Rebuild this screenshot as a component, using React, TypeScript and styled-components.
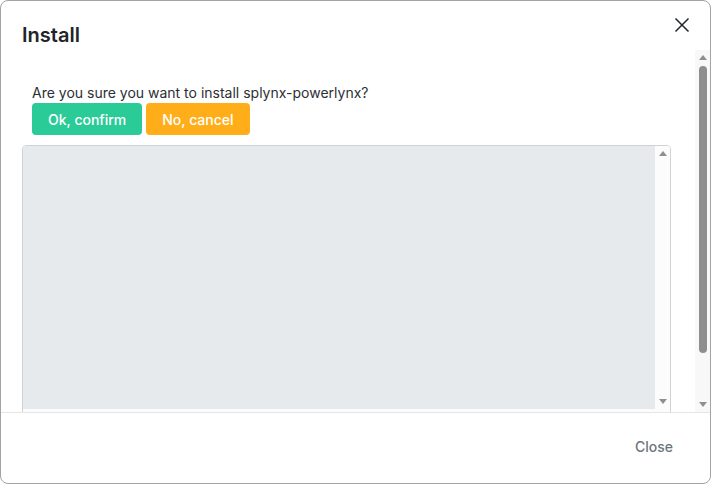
import { styled, createGlobalStyle } from "styled-components";

const GlobalStyle = createGlobalStyle`
  html, body {
    margin: 0;
    padding: 0;
    background: #ffffff;
  }
  * {
    box-sizing: border-box;
  }
`;

type Dir = "up" | "down" | "left" | "right";

const Modal = styled.div`
  width: 711px;
  height: 484px;
  border: 1px solid #a3a3a3;
  border-radius: 8px;
  background: #fff;
  display: flex;
  flex-direction: column;
  overflow: hidden;
  font-family: Inter, "Noto Sans", sans-serif;
  color: #212529;
`;

const Header = styled.div`
  height: 49px;
  flex-shrink: 0;
  display: flex;
  align-items: flex-start;
  justify-content: space-between;
  padding: 20px 20px 0 21px;
`;

const Title = styled.h2`
  margin: 0;
  font-size: 20px;
  line-height: 28px;
  font-weight: 600;
  color: #212529;
`;

const CloseIcon = styled.button`
  border: none;
  background: none;
  padding: 0;
  margin-top: -4px;
  width: 16px;
  height: 16px;
  cursor: pointer;
  color: #212529;
`;

const BodyRow = styled.div`
  flex: 1;
  min-height: 0;
  display: flex;
`;

const Body = styled.div`
  flex: 1;
  min-width: 0;
  overflow: hidden;
  padding: 33px 24px 41px 21px;
`;

const ScrollTrack = styled.div<{ $bg: string }>`
  width: 15px;
  flex-shrink: 0;
  display: flex;
  flex-direction: column;
  background: ${(p) => p.$bg};
`;

const HScrollTrack = styled.div<{ $bg: string }>`
  height: 15px;
  display: flex;
  align-items: center;
  justify-content: space-between;
  background: ${(p) => p.$bg};
`;

const ArrowButton = styled.div`
  width: 15px;
  height: 15px;
  flex-shrink: 0;
  display: flex;
  align-items: center;
  justify-content: center;
`;

const Triangle = styled.span<{ $dir: Dir }>`
  width: 0;
  height: 0;
  border-style: solid;
  border-color: transparent;
  ${(p) =>
    p.$dir === "up"
      ? "border-width: 0 4.5px 5px 4.5px; border-bottom-color: #8f8f8f;"
      : p.$dir === "down"
      ? "border-width: 5px 4.5px 0 4.5px; border-top-color: #8f8f8f;"
      : p.$dir === "left"
      ? "border-width: 4.5px 5px 4.5px 0; border-right-color: #8f8f8f;"
      : "border-width: 4.5px 0 4.5px 5px; border-left-color: #8f8f8f;"}
`;

const ThumbLane = styled.div`
  flex: 1;
  display: flex;
  justify-content: center;
  padding-top: 1px;
`;

const Thumb = styled.div<{ $size: number }>`
  width: 8px;
  height: ${(p) => p.$size}px;
  border-radius: 4px;
  background: #8e8e8e;
`;

const Message = styled.div`
  padding-left: 10px;
`;

const Question = styled.p`
  margin: 0;
  font-size: 14px;
  line-height: 20px;
  color: #2b2f33;
`;

const Actions = styled.div`
  display: flex;
  gap: 4px;
`;

const ActionButton = styled.button<{ $tone: "ok" | "no" }>`
  height: 32px;
  padding: 0 16px;
  border: none;
  border-radius: 4px;
  background: ${(p) => (p.$tone === "ok" ? "#2bcb98" : "#ffae1a")};
  color: #fff;
  font-family: Inter, "Noto Sans", sans-serif;
  font-size: 14px;
  font-weight: 500;
  cursor: pointer;
`;

const LogBox = styled.div`
  margin-top: 10px;
  height: 280px;
  border: 1px solid #cfd3d8;
  border-radius: 4px;
  overflow: hidden;
  display: grid;
  grid-template-columns: 1fr 15px;
  grid-template-rows: 1fr 15px;
`;

const LogContent = styled.div`
  background: #e7eaed;
`;

const Corner = styled.div`
  background: #fcfcfc;
`;

const Footer = styled.div`
  height: 71px;
  flex-shrink: 0;
  border-top: 1px solid #e6e6e6;
  display: flex;
  align-items: center;
  justify-content: flex-end;
  padding: 0 37px 3px 0;
`;

const FooterButton = styled.button`
  border: none;
  background: none;
  padding: 0;
  font-family: Inter, "Noto Sans", sans-serif;
  font-size: 14px;
  font-weight: 500;
  color: #6c757d;
  cursor: pointer;
`;

function VScrollbar({ bg, thumb }: { bg: string; thumb?: number }) {
  return (
    <ScrollTrack $bg={bg}>
      <ArrowButton>
        <Triangle $dir="up" />
      </ArrowButton>
      <ThumbLane>{thumb ? <Thumb $size={thumb} /> : null}</ThumbLane>
      <ArrowButton>
        <Triangle $dir="down" />
      </ArrowButton>
    </ScrollTrack>
  );
}

export default function App() {
  return (
    <>
      <GlobalStyle />
      <Modal>
        <Header>
          <Title>Install</Title>
          <CloseIcon aria-label="close">
            <svg width="16" height="16" viewBox="0 0 16 16">
              <path d="M1.5 1.5 L14.5 14.5 M14.5 1.5 L1.5 14.5" stroke="currentColor" strokeWidth="1.5" fill="none" />
            </svg>
          </CloseIcon>
        </Header>
        <BodyRow>
          <Body>
            <Message>
              <Question>Are you sure you want to install splynx-powerlynx?</Question>
              <Actions>
                <ActionButton $tone="ok">Ok, confirm</ActionButton>
                <ActionButton $tone="no">No, cancel</ActionButton>
              </Actions>
            </Message>
            <LogBox>
              <LogContent />
              <VScrollbar bg="#fcfcfc" />
              <HScrollTrack $bg="#fcfcfc">
                <ArrowButton>
                  <Triangle $dir="left" />
                </ArrowButton>
                <ArrowButton>
                  <Triangle $dir="right" />
                </ArrowButton>
              </HScrollTrack>
              <Corner />
            </LogBox>
          </Body>
          <VScrollbar bg="#f8f8f8" thumb={287} />
        </BodyRow>
        <Footer>
          <FooterButton>Close</FooterButton>
        </Footer>
      </Modal>
    </>
  );
}
